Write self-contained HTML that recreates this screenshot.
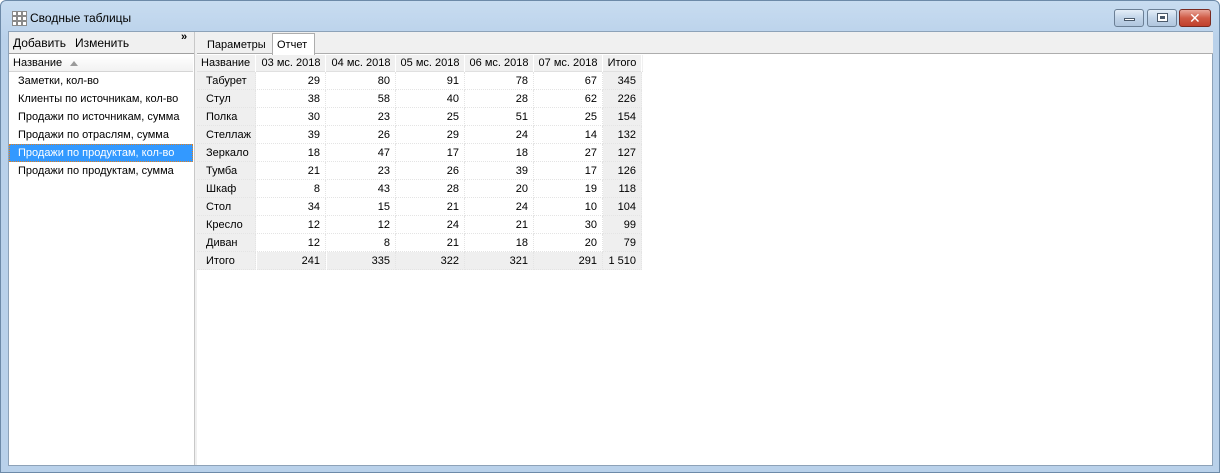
<!DOCTYPE html>
<html><head><meta charset="utf-8"><style>
*{margin:0;padding:0;box-sizing:border-box}
body{width:1220px;height:473px;overflow:hidden;background:#fff;font-family:"Liberation Sans","DejaVu Sans",sans-serif;font-size:11px;color:#000;position:relative}
.frame{position:absolute;left:0;top:0;width:1220px;height:473px;background:linear-gradient(#c8dcf0,#b9d1ea 40px,#b9d1ea);border:1px solid #6d8aa8;border-radius:6px 6px 0 0}
.client{position:absolute;left:8px;top:31px;width:1205px;height:435px;background:#fff;border:1px solid #8da2b8}
.a{position:absolute;white-space:nowrap}
.btn{position:absolute;top:9px;height:18px;border:1px solid #6b7f95;border-radius:3px;background:linear-gradient(#e4eef8,#c2d4e8 50%,#b0c6de)}
.cell{position:absolute;height:18px;line-height:18px;white-space:nowrap}
</style></head><body>
<div class="frame"></div>
<!-- title -->
<svg class="a" style="left:11px;top:10px" width="16" height="16"><g fill="#fff" stroke="#8a8a8a" stroke-width="1">
<rect x="1.5" y="1.5" width="4" height="4"/><rect x="6.5" y="1.5" width="4" height="4"/><rect x="11.5" y="1.5" width="4" height="4"/>
<rect x="1.5" y="6.5" width="4" height="4"/><rect x="6.5" y="6.5" width="4" height="4"/><rect x="11.5" y="6.5" width="4" height="4"/>
<rect x="1.5" y="11.5" width="4" height="4"/><rect x="6.5" y="11.5" width="4" height="4"/><rect x="11.5" y="11.5" width="4" height="4"/></g></svg>
<div class="a" style="left:30px;top:11px;font-size:12px;color:#000">Сводные таблицы</div>
<div class="btn" style="left:1114px;width:30px"><div style="position:absolute;left:9px;top:8px;width:11px;height:3px;background:#fff;border:1px solid #4b5a6b"></div></div>
<div class="btn" style="left:1147px;width:30px"><div style="position:absolute;left:9px;top:3px;width:11px;height:9px;background:#fff;border:1px solid #4b5a6b"></div><div style="position:absolute;left:12px;top:6px;width:5px;height:3px;background:#4b5a6b"></div></div>
<div class="btn" style="left:1179px;width:32px;border-color:#7a2a20;background:linear-gradient(#e9a79a,#cf5a45 50%,#c0402c)"><div style="position:absolute;left:9px;top:1px;color:#fff;font-weight:bold;font-size:14px;line-height:14px">✕</div></div>

<div class="client">
 <!-- left panel -->
 <div class="a" style="left:0;top:0;width:185px;height:433px;background:#fff"></div>
 <div class="a" style="left:0;top:0;width:185px;height:22px;background:#f0f0f0;border-bottom:1px solid #a0a0a0"></div>
 <div class="a" style="left:4px;top:4px;font-size:12px">Добавить</div>
 <div class="a" style="left:66px;top:4px;font-size:12px">Изменить</div>
 <div class="a" style="left:172px;top:-1px;font-size:11px;font-weight:bold">»</div>
 <div class="a" style="left:0;top:23px;width:184px;height:17px;background:linear-gradient(#fff,#f2f2f2);border-bottom:1px solid #d5d5d5"></div>
 <div class="a" style="left:4px;top:25px">Название</div>
 <div class="a" style="left:61px;top:29px;width:0;height:0;border-left:4px solid transparent;border-right:4px solid transparent;border-bottom:5px solid #9a9a9a"></div>
 <div class="cell" style="left:9px;top:40px">Заметки, кол-во</div>
 <div class="cell" style="left:9px;top:58px">Клиенты по источникам, кол-во</div>
 <div class="cell" style="left:9px;top:76px">Продажи по источникам, сумма</div>
 <div class="cell" style="left:9px;top:94px">Продажи по отраслям, сумма</div>
 <div class="a" style="left:0;top:112px;width:184px;height:18px;background:#3399ff;border:1px dotted #e08020"></div>
 <div class="cell" style="left:9px;top:112px;color:#fff">Продажи по продуктам, кол-во</div>
 <div class="cell" style="left:9px;top:130px">Продажи по продуктам, сумма</div>
 <!-- splitter -->
 <div class="a" style="left:185px;top:0;width:3px;height:433px;background:#f0f0f0;border-left:1px solid #c8c8c8"></div>
 <!-- right panel -->
 <div class="a" style="left:188px;top:0;width:1016px;height:22px;background:#f0f0f0;border-bottom:1px solid #adadad"></div>
 <div class="a" style="left:198px;top:7px">Параметры</div>
 <div class="a" style="left:263px;top:1px;width:43px;height:22px;background:#fff;border:1px solid #adadad;border-bottom:none"></div>
 <div class="a" style="left:268px;top:7px">Отчет</div>
 <div class="a" style="left:188px;top:23px;width:446px;height:17px;background:#f0f0f0;border-bottom:1px solid #e0e0e0"></div>
 <div id="grid"></div>
</div>
<script>
var cols=[[188,59],[248,69],[318,69],[387,69],[456,69],[525,69],[594,39]];
var hdr=["Название","03 мс. 2018","04 мс. 2018","05 мс. 2018","06 мс. 2018","07 мс. 2018","Итого"];
var rows=[["Табурет",29,80,91,78,67,345],["Стул",38,58,40,28,62,226],["Полка",30,23,25,51,25,154],["Стеллаж",39,26,29,24,14,132],["Зеркало",18,47,17,18,27,127],["Тумба",21,23,26,39,17,126],["Шкаф",8,43,28,20,19,118],["Стол",34,15,21,24,10,104],["Кресло",12,12,24,21,30,99],["Диван",12,8,21,18,20,79],["Итого",241,335,322,321,291,"1 510"]];
var h="";
for(var c=0;c<7;c++){h+='<div class="cell" style="left:'+(cols[c][0])+'px;top:23px;width:'+cols[c][1]+'px;height:17px;line-height:17px;text-align:'+(c==0?'left;padding-left:4px':'center')+';border-right:1px solid #fff">'+hdr[c]+'</div>';}
for(var r=0;r<rows.length;r++){var y=40+r*18;var tot=r==10;
for(var c=0;c<7;c++){var bg=(c==0||c==6||tot)?'#efefef':'#fff';
h+='<div class="cell" style="left:'+cols[c][0]+'px;top:'+y+'px;width:'+cols[c][1]+'px;background:'+bg+';border-right:1px dotted #e4e4e4;border-bottom:1px dotted #e4e4e4;text-align:'+(c==0?'left;padding-left:9px':'right;padding-right:5px')+'">'+rows[r][c]+'</div>';}}
document.getElementById('grid').innerHTML=h;
</script>
</body></html>
